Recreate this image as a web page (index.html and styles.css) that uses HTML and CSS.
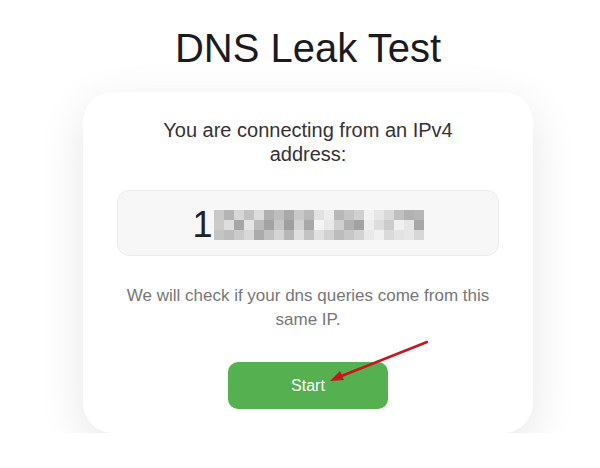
FILE: index.html
```html
<!DOCTYPE html>
<html lang="en">
<head>
    <meta charset="UTF-8">
    <meta name="viewport" content="width=device-width, initial-scale=1.0">
    <title>DNS Leak Test</title>
    <link rel="stylesheet" href="styles.css">
</head>
<body>
    <h1>DNS Leak Test</h1>

    <div class="card">
        <p class="intro">You are connecting from an IPv4 address:</p>

        <div class="ip-box">
            <span class="ip">1</span>
            <!-- blurred part of the address -->
            <svg class="mosaic" width="210" height="30" viewBox="0 0 210 30">
                <g>
                    <rect x="0" y="0" width="10" height="10" fill="#c9c9c9"/>
                    <rect x="10" y="0" width="10" height="10" fill="#b4b4b4"/>
                    <rect x="20" y="0" width="10" height="10" fill="#d6d6d6"/>
                    <rect x="30" y="0" width="10" height="10" fill="#c2c2c2"/>
                    <rect x="40" y="0" width="10" height="10" fill="#dcdcdc"/>
                    <rect x="50" y="0" width="10" height="10" fill="#b0b0b0"/>
                    <rect x="60" y="0" width="10" height="10" fill="#bdbdbd"/>
                    <rect x="70" y="0" width="10" height="10" fill="#a9a9a9"/>
                    <rect x="80" y="0" width="10" height="10" fill="#c8c8c8"/>
                    <rect x="90" y="0" width="10" height="10" fill="#b9b9b9"/>
                    <rect x="100" y="0" width="10" height="10" fill="#e2e2e2"/>
                    <rect x="110" y="0" width="10" height="10" fill="#ededed"/>
                    <rect x="120" y="0" width="10" height="10" fill="#b8b8b8"/>
                    <rect x="130" y="0" width="10" height="10" fill="#c4c4c4"/>
                    <rect x="140" y="0" width="10" height="10" fill="#d0d0d0"/>
                    <rect x="150" y="0" width="10" height="10" fill="#f2f2f2"/>
                    <rect x="160" y="0" width="10" height="10" fill="#e6e6e6"/>
                    <rect x="170" y="0" width="10" height="10" fill="#d9d9d9"/>
                    <rect x="180" y="0" width="10" height="10" fill="#c0c0c0"/>
                    <rect x="190" y="0" width="10" height="10" fill="#b2b2b2"/>
                    <rect x="200" y="0" width="10" height="10" fill="#b6b6b6"/>
                </g>
                <g>
                    <rect x="0" y="10" width="10" height="10" fill="#cbcbcb"/>
                    <rect x="10" y="10" width="10" height="10" fill="#dedede"/>
                    <rect x="20" y="10" width="10" height="10" fill="#a6a6a6"/>
                    <rect x="30" y="10" width="10" height="10" fill="#e4e4e4"/>
                    <rect x="40" y="10" width="10" height="10" fill="#bababa"/>
                    <rect x="50" y="10" width="10" height="10" fill="#a3a3a3"/>
                    <rect x="60" y="10" width="10" height="10" fill="#c6c6c6"/>
                    <rect x="70" y="10" width="10" height="10" fill="#9f9f9f"/>
                    <rect x="80" y="10" width="10" height="10" fill="#d2d2d2"/>
                    <rect x="90" y="10" width="10" height="10" fill="#a8a8a8"/>
                    <rect x="100" y="10" width="10" height="10" fill="#f4f4f4"/>
                    <rect x="110" y="10" width="10" height="10" fill="#e8e8e8"/>
                    <rect x="120" y="10" width="10" height="10" fill="#cfcfcf"/>
                    <rect x="130" y="10" width="10" height="10" fill="#b1b1b1"/>
                    <rect x="140" y="10" width="10" height="10" fill="#a2a2a2"/>
                    <rect x="150" y="10" width="10" height="10" fill="#eeeeee"/>
                    <rect x="160" y="10" width="10" height="10" fill="#dddddd"/>
                    <rect x="170" y="10" width="10" height="10" fill="#cccccc"/>
                    <rect x="180" y="10" width="10" height="10" fill="#f0f0f0"/>
                    <rect x="190" y="10" width="10" height="10" fill="#e6e6e6"/>
                    <rect x="200" y="10" width="10" height="10" fill="#a7a7a7"/>
                </g>
                <g>
                    <rect x="0" y="20" width="10" height="10" fill="#c4c4c4"/>
                    <rect x="10" y="20" width="10" height="10" fill="#bdbdbd"/>
                    <rect x="20" y="20" width="10" height="10" fill="#cacaca"/>
                    <rect x="30" y="20" width="10" height="10" fill="#d8d8d8"/>
                    <rect x="40" y="20" width="10" height="10" fill="#ababab"/>
                    <rect x="50" y="20" width="10" height="10" fill="#c1c1c1"/>
                    <rect x="60" y="20" width="10" height="10" fill="#d4d4d4"/>
                    <rect x="70" y="20" width="10" height="10" fill="#b7b7b7"/>
                    <rect x="80" y="20" width="10" height="10" fill="#dfdfdf"/>
                    <rect x="90" y="20" width="10" height="10" fill="#c3c3c3"/>
                    <rect x="100" y="20" width="10" height="10" fill="#e0e0e0"/>
                    <rect x="110" y="20" width="10" height="10" fill="#d1d1d1"/>
                    <rect x="120" y="20" width="10" height="10" fill="#bcbcbc"/>
                    <rect x="130" y="20" width="10" height="10" fill="#c7c7c7"/>
                    <rect x="140" y="20" width="10" height="10" fill="#d3d3d3"/>
                    <rect x="150" y="20" width="10" height="10" fill="#e9e9e9"/>
                    <rect x="160" y="20" width="10" height="10" fill="#f1f1f1"/>
                    <rect x="170" y="20" width="10" height="10" fill="#dadada"/>
                    <rect x="180" y="20" width="10" height="10" fill="#e3e3e3"/>
                    <rect x="190" y="20" width="10" height="10" fill="#e7e7e7"/>
                    <rect x="200" y="20" width="10" height="10" fill="#d7d7d7"/>
                </g>
            </svg>
        </div>

        <p class="note">We will check if your dns queries come from this same IP.</p>

        <button class="btn">Start</button>

        <!-- red arrow pointing at the button -->
        <svg class="arrow" width="110" height="50" viewBox="0 0 110 50">
            <line x1="104" y1="5" x2="16" y2="40" stroke="#c8161d" stroke-width="2.5" stroke-linecap="round"/>
            <polygon points="7,44 17,34 21,43" fill="#c8161d"/>
        </svg>
    </div>
</body>
</html>
```

FILE: styles.css
```css
body {
    font-family: "Liberation Sans", Arial, sans-serif;
    background: #ffffff;
    margin: 0;
    padding: 25px 0 0 16px;
    text-align: center;
}
h1 {
    margin: 0;
    font-size: 40px;
    font-weight: normal;
    line-height: 46px;
    color: #1b1b1f;
}
.card {
    position: relative;
    width: 450px;
    box-sizing: border-box;
    margin: 21px auto 0;
    padding: 26px 34px 24px;
    background: #ffffff;
    border-radius: 30px;
    box-shadow: 0 12px 45px rgba(0, 0, 0, 0.1);
}
.intro {
    margin: 0 20px;
    font-size: 20px;
    line-height: 24px;
    color: #333333;
}
.ip-box {
    display: flex;
    align-items: center;
    justify-content: center;
    height: 64px;
    margin-top: 24px;
    background: #f7f7f7;
    border: 1px solid #ececec;
    border-radius: 12px;
}
.ip {
    font-size: 36px;
    color: #222222;
    margin-top: 4px;
}
.mosaic {
    display: block;
    margin-left: 1px;
    margin-top: 3px;
}
.note {
    margin: 28px 0 0;
    font-size: 17px;
    line-height: 24px;
    color: #777777;
}
.btn {
    display: block;
    width: 160px;
    height: 47px;
    margin: 30px auto 0;
    border: none;
    border-radius: 10px;
    background: #55b04f;
    color: #ffffff;
    font-family: inherit;
    font-size: 16px;
}
.arrow {
    position: absolute;
    left: 240px;
    top: 245px;
}
```
